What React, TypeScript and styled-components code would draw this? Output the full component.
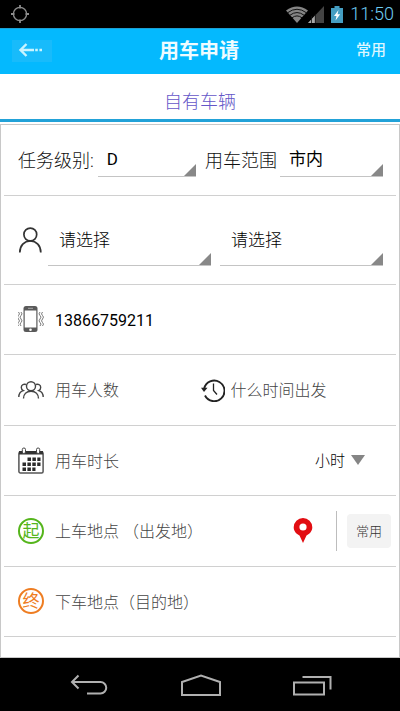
import React from "react";
import styled, { createGlobalStyle } from "styled-components";

const GlobalStyle = createGlobalStyle`
  *, *::before, *::after { box-sizing: border-box; }
  body { margin: 0; background: #fff; }
  body, button, input, select {
    font-family: Roboto, "Noto Sans CJK SC", sans-serif;
    font-weight: 300;
  }
  button, input, select { margin: 0; padding: 0; border: 0; outline: 0; background: none; }
  svg { display: block; flex: none; }
`;

const Page = styled.div`
  display: flex;
  flex-direction: column;
  min-height: 100vh;
`;

const StatusBar = styled.div`
  display: flex;
  align-items: center;
  height: 28px;
  padding: 0 6px 0 10px;
  background: #000;
`;

const StatusIcons = styled.div`
  display: flex;
  align-items: center;
  gap: 7px;
  margin-left: auto;
`;

const Signals = styled.div`
  display: flex;
  align-items: center;
`;

const Clock = styled.time`
  font-size: 18px;
  font-weight: 300;
  line-height: 28px;
  color: #6fcdf3;
`;

const Header = styled.header`
  display: grid;
  grid-template-columns: 1fr auto 1fr;
  align-items: center;
  height: 46px;
  padding: 0 14px 0 12px;
  background: #04b9fe;
  box-shadow: inset 0 1px #1c9fd2;
`;

const BackButton = styled.button`
  display: flex;
  align-items: center;
  justify-self: start;
  width: 40px;
  height: 22px;
  padding: 0 0 2px 6px;
  background: #18bbfb;
`;

const Title = styled.h1`
  margin: 0;
  font-size: 20px;
  font-weight: 700;
  line-height: 28px;
  color: #effcff;
`;

const HeaderAction = styled.button`
  justify-self: end;
  padding-bottom: 2px;
  font-size: 15px;
  font-weight: 500;
  line-height: 20px;
  color: #dcf6ff;
`;

const Tabs = styled.nav`
  display: flex;
  justify-content: center;
  height: 48px;
  padding-top: 5px;
  border-bottom: 3px solid #22a2d8;
`;

const Tab = styled.a`
  font-size: 18px;
  line-height: 45px;
  color: #6456c8;
  text-decoration: none;
`;

const Form = styled.form`
  display: flex;
  flex: 1;
  flex-direction: column;
  margin-top: 2px;
  padding: 0 3px 20px;
  border: 1px solid #c8c8c8;
`;

const Row = styled.div<{ $tall?: boolean }>`
  display: flex;
  flex: ${(p) => (p.$tall ? "0 0 89px" : "1 0 70px")};
  align-items: center;
  padding: 0 13px 0 14px;
  border-bottom: 1px solid #d0d0d0;
`;

const Field = styled.div<{ $gap: number; $after?: number }>`
  display: flex;
  flex: 1 1 0;
  align-items: center;
  gap: ${(p) => p.$gap}px;
  min-width: 0;
  margin-right: ${(p) => p.$after ?? 0}px;
`;

const Label = styled.label`
  flex: none;
  padding-top: 2px;
  font-size: 18px;
  line-height: 24px;
  color: #111;
`;

const Spinner = styled.select<{ $tall?: boolean }>`
  appearance: none;
  flex: 1;
  min-width: 0;
  height: ${(p) => (p.$tall ? 52 : 34)}px;
  padding: ${(p) => (p.$tall ? "2px 0 0 11px" : "0 0 0 9px")};
  font-size: 17px;
  font-weight: ${(p) => (p.$tall ? 300 : 400)};
  color: #000;
  border-bottom: 1px solid #c4c4c4;
  border-radius: 0;
  background: linear-gradient(135deg, transparent 47%, #888 53%) right bottom / 13px 13px no-repeat border-box;
`;

const IconLabel = styled.label`
  display: flex;
  flex: none;
  align-items: center;
  width: 26px;
`;

const TextInput = styled.input`
  flex: 1;
  min-width: 0;
  height: 40px;
  padding-top: 2px;
  font-size: 16px;
  color: #111;
  &::placeholder { color: #444; opacity: 1; }
`;

const PhoneInput = styled(TextInput)`
  font-weight: 400;
  color: #000;
`;

const UnitWrap = styled.span`
  display: flex;
  align-items: center;
  gap: 5px;
  margin-right: 18px;
`;

const Unit = styled.select`
  appearance: none;
  width: 31px;
  height: 40px;
  padding-top: 2px;
  font-size: 15px;
  color: #000;
`;

const Badge = styled.label<{ $color: string }>`
  display: flex;
  flex: none;
  align-items: center;
  justify-content: center;
  width: 26px;
  height: 26px;
  font-size: 17px;
  font-weight: 400;
  line-height: 22px;
  color: ${(p) => p.$color};
  border: 2px solid ${(p) => p.$color};
  border-radius: 50%;
`;

const PlaceRow = styled(Row)`
  padding-right: 5px;
`;

const PinButton = styled.button`
  display: flex;
  margin-right: 23px;
`;

const Divider = styled.span`
  width: 1px;
  height: 40px;
  margin-right: 10px;
  background: #bdbdbd;
`;

const CommonButton = styled.button`
  width: 44px;
  height: 34px;
  font-size: 13px;
  color: #333;
  background: #f3f3f3;
  border-radius: 4px;
`;

const NavBar = styled.nav`
  display: flex;
  align-items: center;
  justify-content: space-between;
  height: 53px;
  padding: 0 68px 0 70px;
  background: #000;
`;

const NavButton = styled.button`
  display: flex;
`;

const TargetIcon = () => (
  <svg width="20" height="20" viewBox="0 0 20 20" fill="none" stroke="#8d8d8d" strokeWidth="1.3">
    <circle cx="10" cy="10" r="6.6" />
    <path d="M10 1v3.500M10 15.500v3.500M1 10h3.500M15.500 10H19" strokeWidth="1.800" />
  </svg>
);

const WifiIcon = () => (
  <svg width="22" height="17" viewBox="0 0 22 17">
    <path d="M0 4.500Q11-3.500 22 4.500L11 17Z" fill="#858585" />
    <path d="M1.500 6.800Q11-.3 20.500 6.800M3.800 9.300Q11 3.800 18.200 9.300M6 11.800Q11 8 16 11.800" fill="none" stroke="#111" strokeWidth="1" />
  </svg>
);

const CellIcon = () => (
  <svg width="16" height="17" viewBox="0 0 16 17">
    <path d="M0 17L16 0V17Z" fill="#444" />
    <path d="M0 17L7 9.500V17Z" fill="#a8a8a8" />
    <path d="M3.500 10v7M7.300 8v9" stroke="#111" strokeWidth=".8" />
  </svg>
);

const BatteryIcon = () => (
  <svg width="12" height="17" viewBox="0 0 12 17">
    <path d="M3.500 0h5v2H12v15H0V2h3.500Z" fill="#459ec2" />
    <path d="M7.500 4L3 10h2.500l-1 4.500L9.200 8.300H6.500Z" fill="#fff" />
  </svg>
);

const BackArrow = () => (
  <svg width="25" height="14" viewBox="0 0 25 14" fill="none" stroke="#c9f4ff" strokeWidth="2.400">
    <path d="M8.500 1L2.500 7l6 6M2 7h14M17.200 7h2.600M21.400 7h2.600" />
  </svg>
);

const PersonIcon = () => (
  <svg width="24" height="26" viewBox="0 0 24 26" fill="none" stroke="#333" strokeWidth="1.700">
    <circle cx="12.300" cy="7.500" r="6.400" />
    <path d="M1.800 25.500C1.800 18.500 6.300 14 12.300 14s10.500 4.500 10.500 11.500" />
  </svg>
);

const PhoneIcon = () => (
  <svg width="26" height="26" viewBox="0 0 26 26">
    <rect x="5.500" y="0" width="14" height="26" rx="2.500" fill="#5a5a5a" />
    <rect x="6.700" y="4.500" width="11.600" height="17" fill="#fff" />
    <path d="M10 2.300h5" stroke="#aaa" strokeWidth="1" />
    <circle cx="12.500" cy="23.700" r="1.300" fill="#fff" />
    <path d="M.5 6q2 2 0 3.500t0 3.500 0 3.500 0 3.500M3 6q2 2 0 3.500t0 3.500 0 3.500 0 3.500M22 6q-2 2 0 3.500t0 3.500 0 3.500 0 3.500M24.500 6q-2 2 0 3.500t0 3.500 0 3.500 0 3.500" fill="none" stroke="#777" strokeWidth="1" />
  </svg>
);

const GroupIcon = () => (
  <svg width="26" height="18" viewBox="0 0 26 18" fill="none" stroke="#444" strokeWidth="1.400">
    <circle cx="13" cy="5.300" r="4.500" />
    <path d="M5.500 17.500c0-4.500 3-7.300 7.500-7.300s7.500 2.800 7.500 7.300" />
    <path d="M8 3.500C5.500 2.600 3.300 4.200 3.300 6.400c0 1.500.8 2.600 2 3.200C2.500 10.500.8 12.800.8 16M18 3.500c2.500-.9 4.700.7 4.700 2.900 0 1.500-.8 2.600-2 3.200 2.800.9 4.500 3.200 4.500 6.400" />
  </svg>
);

const HistoryIcon = () => (
  <svg width="24" height="24" viewBox="0 0 24 24" fill="none" stroke="#222">
    <path d="M3.200 10.500A10.300 10.300 0 1 1 4 17.500" strokeWidth="1.900" />
    <path d="M0 9.800h6.500L3 14Z" fill="#222" stroke="none" />
    <path d="M12.500 5.500V12.500l3.500 4" strokeWidth="1.300" />
  </svg>
);

const CalendarIcon = () => (
  <svg width="26" height="27" viewBox="0 0 26 27">
    <rect x=".9" y="5" width="24.200" height="21" rx="1.500" fill="#fff" stroke="#555" strokeWidth="1.500" />
    <path d="M1 4h24v3.500H1Z" fill="#333" />
    <rect x="4.300" y="1" width="3.200" height="5.500" rx="1.500" fill="#fff" stroke="#444" />
    <rect x="18.500" y="1" width="3.200" height="5.500" rx="1.500" fill="#fff" stroke="#444" />
    <path d="M9.500 12.200h13M4.500 17.200h18M4.500 22.200h13" stroke="#2b2b2b" strokeWidth="3.600" strokeDasharray="3.500 1.400" />
  </svg>
);

const PinIcon = () => (
  <svg width="20" height="25" viewBox="0 0 20 25">
    <path d="M10 0a9.300 9.300 0 0 1 9.300 9.300c0 3.800-2.500 6.600-5.800 8.200L10 25l-3.500-7.500C3.200 15.900.7 13.100.7 9.300A9.300 9.300 0 0 1 10 0Z" fill="#e20d12" />
    <circle cx="10" cy="9" r="3.600" fill="#fff" />
  </svg>
);

const TriangleIcon = () => (
  <svg width="14" height="10" viewBox="0 0 14 10">
    <path d="M0 0h14L7 10Z" fill="#858585" />
  </svg>
);

const NavBack = () => (
  <svg width="38" height="22" viewBox="0 0 38 22" fill="none" stroke="#b0b0b0" strokeWidth="2">
    <path d="M8.500 1.500L2 8l6.500 6.500M2 8h28.500a5.500 5.500 0 0 1 0 11.500H17" />
  </svg>
);

const NavHome = () => (
  <svg width="40" height="22" viewBox="0 0 40 22" fill="none" stroke="#b0b0b0" strokeWidth="2">
    <path d="M1 21V8L20 1.500 39 8v13Z" />
  </svg>
);

const NavRecents = () => (
  <svg width="39" height="22" viewBox="0 0 39 22" fill="none" stroke="#b0b0b0" strokeWidth="2">
    <path d="M1 8.500h30v12H1ZM9.500 3h28V15.500" />
  </svg>
);

export default function App() {
  return (
    <>
      <GlobalStyle />
      <Page>
        <StatusBar>
          <TargetIcon />
          <StatusIcons>
            <Signals>
              <WifiIcon />
              <CellIcon />
            </Signals>
            <BatteryIcon />
            <Clock>11:50</Clock>
          </StatusIcons>
        </StatusBar>

        <Header>
          <BackButton type="button" aria-label="返回">
            <BackArrow />
          </BackButton>
          <Title>用车申请</Title>
          <HeaderAction type="button">常用</HeaderAction>
        </Header>

        <Tabs>
          <Tab href="#own">自有车辆</Tab>
        </Tabs>

        <Form>
          <Row>
            <Field $gap={4} $after={9}>
              <Label htmlFor="level">任务级别:</Label>
              <Spinner id="level">
                <option>D</option>
              </Spinner>
            </Field>
            <Field $gap={3}>
              <Label htmlFor="range">用车范围</Label>
              <Spinner id="range">
                <option>市内</option>
              </Spinner>
            </Field>
          </Row>

          <Row $tall>
            <Field $gap={4}>
              <IconLabel htmlFor="person" aria-label="用车人">
                <PersonIcon />
              </IconLabel>
              <Field $gap={9}>
                <Spinner $tall id="person">
                  <option>请选择</option>
                </Spinner>
                <Spinner $tall aria-label="部门">
                  <option>请选择</option>
                </Spinner>
              </Field>
            </Field>
          </Row>

          <Row>
            <Field $gap={11}>
              <IconLabel htmlFor="phone" aria-label="电话">
                <PhoneIcon />
              </IconLabel>
              <PhoneInput id="phone" type="tel" defaultValue="13866759211" />
            </Field>
          </Row>

          <Row>
            <Field $gap={11}>
              <IconLabel htmlFor="count" aria-label="用车人数">
                <GroupIcon />
              </IconLabel>
              <TextInput id="count" placeholder="用车人数" />
            </Field>
            <Field $gap={4}>
              <IconLabel htmlFor="depart" aria-label="什么时间出发">
                <HistoryIcon />
              </IconLabel>
              <TextInput id="depart" placeholder="什么时间出发" />
            </Field>
          </Row>

          <Row>
            <Field $gap={11}>
              <IconLabel htmlFor="duration" aria-label="用车时长">
                <CalendarIcon />
              </IconLabel>
              <TextInput id="duration" placeholder="用车时长" />
            </Field>
            <UnitWrap>
              <Unit aria-label="时长单位">
                <option>小时</option>
              </Unit>
              <TriangleIcon />
            </UnitWrap>
          </Row>

          <PlaceRow>
            <Field $gap={11}>
              <Badge $color="#55b51c" htmlFor="start">起</Badge>
              <TextInput id="start" placeholder="上车地点 （出发地）" />
            </Field>
            <PinButton type="button" aria-label="选择地点">
              <PinIcon />
            </PinButton>
            <Divider />
            <CommonButton type="button">常用</CommonButton>
          </PlaceRow>

          <PlaceRow>
            <Field $gap={11}>
              <Badge $color="#ee7d22" htmlFor="end">终</Badge>
              <TextInput id="end" placeholder="下车地点（目的地）" />
            </Field>
          </PlaceRow>
        </Form>

        <NavBar>
          <NavButton type="button" aria-label="返回">
            <NavBack />
          </NavButton>
          <NavButton type="button" aria-label="主页">
            <NavHome />
          </NavButton>
          <NavButton type="button" aria-label="最近任务">
            <NavRecents />
          </NavButton>
        </NavBar>
      </Page>
    </>
  );
}
